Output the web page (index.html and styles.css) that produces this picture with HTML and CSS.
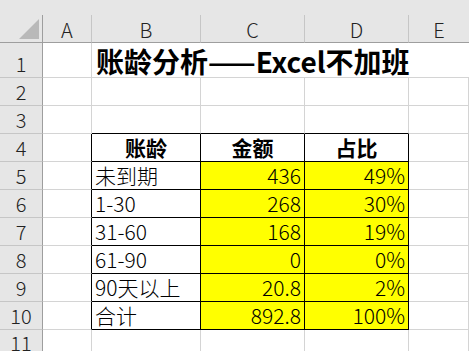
FILE: index.html
```html
<!DOCTYPE html>
<html>
<head>
<meta charset="utf-8">
<link rel="stylesheet" href="styles.css">
</head>
<body>
<div class="sheet">
  <div class="topbar"></div>

  <div class="corner"><svg class="tri" width="20" height="20" viewBox="0 0 20 20"><polygon points="20,0 20,20 0,20" fill="#b9b9b9"/></svg></div>
  <div class="ch">A</div>
  <div class="ch">B</div>
  <div class="ch">C</div>
  <div class="ch">D</div>
  <div class="ch last">E</div>

  <div class="rh r1">1</div>
  <div class="c r1"></div>
  <div class="c r1 title">账龄分析——Excel不加班</div>

  <div class="rh">2</div>
  <div class="c"></div><div class="c"></div><div class="c"></div><div class="c"></div><div class="c"></div>

  <div class="rh">3</div>
  <div class="c"></div><div class="c bb"></div><div class="c bb"></div><div class="c bb"></div><div class="c"></div>

  <div class="rh">4</div>
  <div class="c br"></div>
  <div class="c t hd">账龄</div>
  <div class="c t hd">金额</div>
  <div class="c t hd">占比</div>
  <div class="c"></div>

  <div class="rh">5</div>
  <div class="c br"></div>
  <div class="c t tx">未到期</div>
  <div class="c t y num">436</div>
  <div class="c t y num">49%</div>
  <div class="c"></div>

  <div class="rh">6</div>
  <div class="c br"></div>
  <div class="c t tx">1-30</div>
  <div class="c t y num">268</div>
  <div class="c t y num">30%</div>
  <div class="c"></div>

  <div class="rh">7</div>
  <div class="c br"></div>
  <div class="c t tx">31-60</div>
  <div class="c t y num">168</div>
  <div class="c t y num">19%</div>
  <div class="c"></div>

  <div class="rh">8</div>
  <div class="c br"></div>
  <div class="c t tx">61-90</div>
  <div class="c t y num">0</div>
  <div class="c t y num">0%</div>
  <div class="c"></div>

  <div class="rh">9</div>
  <div class="c br"></div>
  <div class="c t tx">90天以上</div>
  <div class="c t y num">20.8</div>
  <div class="c t y num">2%</div>
  <div class="c"></div>

  <div class="rh">10</div>
  <div class="c br"></div>
  <div class="c t tx">合计</div>
  <div class="c t y num">892.8</div>
  <div class="c t y num">100%</div>
  <div class="c"></div>

  <div class="rh lastrow">11</div>
  <div class="c"></div><div class="c"></div><div class="c"></div><div class="c"></div><div class="c"></div>
</div>
</body>
</html>
```

FILE: styles.css
```css
html, body {
  margin: 0;
  padding: 0;
  background: #ffffff;
  overflow: hidden;
}

.sheet {
  width: 469px;
  height: 351px;
  display: grid;
  grid-template-columns: 43px 49px 109px 104px 104px 1fr;
  grid-template-rows: 15px 28px 35px repeat(9, 28px) 40px;
  font-family: "Noto Sans CJK SC", sans-serif;
  color: #000;
  overflow: hidden;
}

.topbar {
  grid-column: 1 / -1;
  background: #e6e6e6;
}

.corner {
  background: #e6e6e6;
  border-right: 1px solid #9e9e9e;
  border-bottom: 1px solid #9e9e9e;
  box-sizing: border-box;
  display: flex;
  align-items: flex-end;
  justify-content: flex-end;
  padding: 0 3px 3px 0;
}

.tri { display: block; }

.ch {
  background: #e6e6e6;
  border-right: 1px solid #c6c6c6;
  border-bottom: 1px solid #9e9e9e;
  box-sizing: border-box;
  display: flex;
  align-items: center;
  justify-content: center;
  font-size: 20px;
  font-weight: 300;
  line-height: 20px;
  color: #222;
  padding-top: 2px;
}
.ch.last { border-right: none; }

.rh {
  background: #e6e6e6;
  border-right: 1px solid #9e9e9e;
  border-bottom: 1px solid #c6c6c6;
  box-sizing: border-box;
  display: flex;
  align-items: flex-end;
  justify-content: center;
  font-size: 20px;
  font-weight: 300;
  color: #222;
  line-height: 24px;
  padding-bottom: 1px;
}

.rh.lastrow {
  align-items: flex-start;
  padding-top: 1px;
  padding-bottom: 0;
}

.c {
  border-right: 1px solid #d4d4d4;
  border-bottom: 1px solid #d4d4d4;
  box-sizing: border-box;
  display: flex;
  align-items: flex-end;
  white-space: nowrap;
  min-width: 0;
}

.title {
  grid-column: 3 / -1;
  border-right: none;
  font-size: 28px;
  font-weight: 700;
  line-height: 32px;
  padding-left: 4px;
  overflow: visible;
}

.bb { border-bottom-color: #000; }
.br { border-right-color: #000; }
.t { border-right-color: #000; border-bottom-color: #000; }

.y { background: #ffff00; }

.hd {
  justify-content: center;
  font-size: 21px;
  font-weight: 700;
  line-height: 27px;
}

.tx {
  font-size: 21px;
  font-weight: 300;
  line-height: 27px;
  padding-left: 3px;
}

.num {
  justify-content: flex-end;
  font-size: 21px;
  font-weight: 300;
  line-height: 27px;
  padding-right: 3px;
}
```
